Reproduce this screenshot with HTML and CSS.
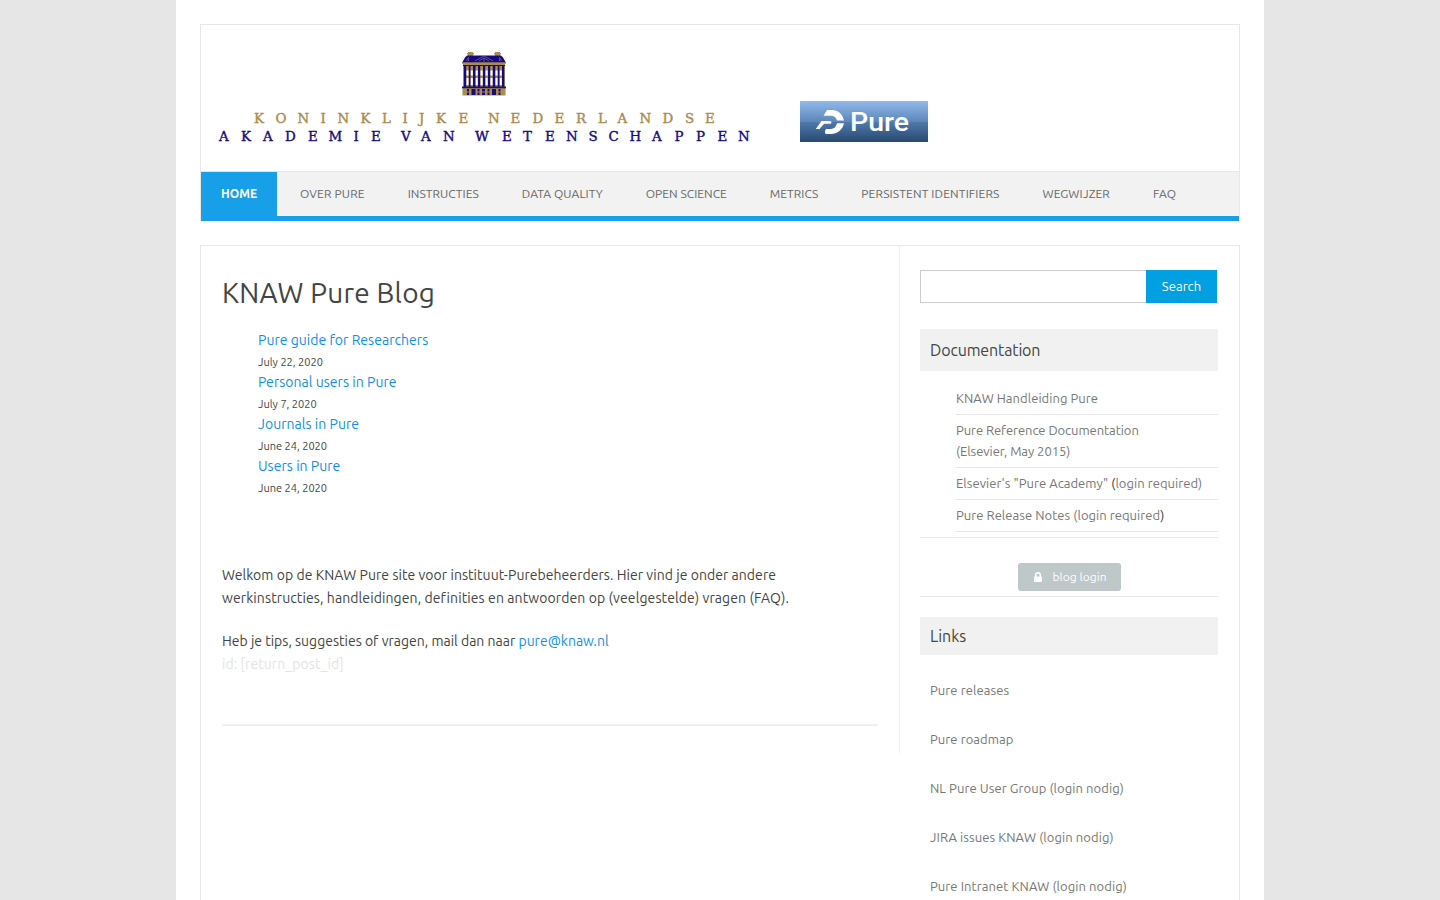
FILE: index.html
```html
<!DOCTYPE html>
<html lang="nl">
<head>
<meta charset="utf-8">
<title>KNAW Pure Blog</title>
<link rel="stylesheet" href="styles.css">
</head>
<body>
<div class="page">
  <header class="site-header">
    <div class="branding">
      <svg class="knaw-logo" width="540" height="100" viewBox="210 48 540 100" role="img">
        <g>
          <path fill="#a88d4d" d="M468 52h5v5h-5zM495 52h5v5h-5zM467 53h7v1.500h-7zM494 53h7v1.500h-7z"/>
          <path fill="#170a80" d="M467 55.500h34l2 2 3 5.500h-44l3-5.500z"/>
          <path fill="#7a6560" d="M462 62h44v1.500h-44z"/>
          <path fill="none" stroke="#7a6578" stroke-width=".8" d="M475 61l9-5 9 5M479 61l5-3 5 3M484 58v4M467 61v-2l1.500-1.500v3.500M499.500 61v-3.500l1.500 1.500v2"/>
          <path fill="#a88d4d" d="M463 63h42v27h-42z"/>
          <path fill="#170a80" d="M463 65h42v1h-42zM464 66h2.200v21h-2.200zM468.700 66h1.800v21h-1.800zM473 66h2.500v21h-2.500zM478 66h2.200v21h-2.200zM483 66h2.200v21h-2.200zM488 66h2.200v21h-2.200zM492.800 66h2.500v21h-2.500zM497.700 66h1.800v21h-1.800zM502 66h2.200v21h-2.200zM462 86.500h44v2h-44z"/>
          <path fill="#fff" d="M466.500 70.500h2v5h-2zM470.800 70.500h2v5h-2zM475.700 70.500h2v5h-2zM480.600 70.500h2v5h-2zM485.600 70.500h2v5h-2zM490.500 70.500h2v5h-2zM495.500 70.500h2v5h-2zM499.800 70.500h2v5h-2zM466.500 78h2v7h-2zM470.800 78h2v7h-2zM475.700 78h2v7h-2zM480.600 78h2v7h-2zM485.600 78h2v7h-2zM490.500 78h2v7h-2zM495.500 78h2v7h-2zM499.800 78h2v7h-2z"/>
          <path fill="#a88d4d" d="M462.500 88.500h43v7h-43z"/>
          <path fill="#170a80" d="M467 89h2v6h-2zM471.500 89h4v6h-4zM477.500 89h2v6h-2zM482 89h3v6h-3zM487.500 89h2v6h-2zM492 89h4v6h-4zM498.500 89h2v6h-2z"/>
          <path fill="#a88d4d" d="M467 91.500h3v1h-3zM477 91.500h3v1h-3zM482 91.500h3v1h-3zM487 91.500h3v1h-3zM498 91.500h3v1h-3z"/>
        </g>
        <text class="knaw-line gold" y="122.500" x="254 275.500 297.500 320.500 337.500 360.500 382 402.500 419 436 458.500 488 510.500 532.500 554.500 576 598 617.500 639.500 662.500 685 705">KONINKLIJKENEDERLANDSE</text>
        <text class="knaw-line navy" y="141" x="219 241 263 285 308 328.500 353.500 371 401 421 443 475 502 523 545 566 588.500 608.500 629.500 652 674.500 696 717.500 738">AKADEMIEVANWETENSCHAPPEN</text>
      </svg>
      <svg class="pure-logo" width="128" height="41" viewBox="0 0 128 41" role="img">
        <defs>
          <linearGradient id="pure-bg" x1="0" y1="0" x2="0" y2="1">
            <stop offset="0" stop-color="#92baec"/>
            <stop offset=".5" stop-color="#5d87ba"/>
            <stop offset=".52" stop-color="#4f79ab"/>
            <stop offset="1" stop-color="#284870"/>
          </linearGradient>
        </defs>
        <path fill="url(#pure-bg)" d="M0 0h128v41H0z"/>
        <path fill="#fff" d="M27 9h5c6 0 10.500 4 12 10.500h-7c-.8-2.800-3-4.800-6.500-4.800H23.500zM21.500 20H30c1.600 0 2 1.500.8 2.800h-6.600L19.500 28H15.800z"/>
        <path fill="#fff" d="M37 22.300h7C42.500 29 37.500 33 31 33h-4.500c-1.700 0-2-2.400-.6-5H31c3 0 5.200-2.300 6-5.700z"/>
        <text class="pure-word" x="50" y="29.500" textLength="59" lengthAdjust="spacingAndGlyphs">Pure</text>
      </svg>
    </div>
    <nav class="main-nav">
      <a class="current">HOME</a>
      <a class="wider">OVER PURE</a>
      <a>INSTRUCTIES</a>
      <a>DATA QUALITY</a>
      <a>OPEN SCIENCE</a>
      <a>METRICS</a>
      <a class="wider">PERSISTENT IDENTIFIERS</a>
      <a class="wide">WEGWIJZER</a>
      <a class="wide">FAQ</a>
    </nav>
  </header>

  <div class="content">
    <main class="main-col">
      <h1>KNAW Pure Blog</h1>
      <ul class="posts">
        <li><a>Pure guide for Researchers</a><time>July 22, 2020</time></li>
        <li><a>Personal users in Pure</a><time>July 7, 2020</time></li>
        <li><a>Journals in Pure</a><time>June 24, 2020</time></li>
        <li><a>Users in Pure</a><time>June 24, 2020</time></li>
      </ul>
      <p><span class="slight">Welkom op de KNAW Pure site voor instituut-Purebeheerders. Hier vind je onder andere</span><br><span class="wide">werkinstructies, handleidingen, definities en antwoorden op (veelgestelde) vragen (FAQ).</span></p>
      <p>Heb je tips, suggesties of vragen, mail dan naar <a>pure@knaw.nl</a><br><span class="post-id">id: [return_post_id]</span></p>
      <hr>
    </main>

    <aside class="sidebar">
      <form class="search"><input type="text" aria-label="Search"><button type="button">Search</button></form>
      <h2 class="doc-title">Documentation</h2>
      <ul class="docs">
        <li><a>KNAW Handleiding Pure</a></li>
        <li class="narrow"><a>Pure Reference Documentation<br>(Elsevier, May 2015)</a></li>
        <li><a>Elsevier's "Pure Academy"</a> (<a>login required)</a></li>
        <li><a>Pure Release Notes (login required</a>)</li>
      </ul>
      <div class="login-row">
        <a class="login"><svg width="8" height="10" viewBox="0 0 8 10"><path fill="#fff" fill-rule="evenodd" d="M1 4.500V3a3 3 0 0 1 6 0v1.500h.4c.4 0 .6.2.6.6v4.200c0 .4-.2.700-.6.700H.6c-.4 0-.6-.3-.6-.700V5.100c0-.4.200-.6.600-.6zm1.500 0h3V3a1.500 1.500 0 0 0-3 0z"/></svg><span>blog login</span></a>
      </div>
      <h2 class="links-title">Links</h2>
      <ul class="links">
        <li>Pure releases</li>
        <li>Pure roadmap</li>
        <li>NL Pure User Group (login nodig)</li>
        <li>JIRA issues KNAW (login nodig)</li>
        <li>Pure Intranet KNAW (login nodig)</li>
      </ul>
    </aside>
  </div>
</div>
</body>
</html>
```
FILE: styles.css
```css
* { box-sizing: border-box; }
body {
  margin: 0;
  background: #e6e6e6;
  color: #444;
  font: 14px/23px Ubuntu, "Noto Sans", sans-serif;
}
h1, h2, p, ul { margin: 0; padding: 0; font-weight: 400; }
ul { list-style: none; }

.page {
  width: 1088px;
  height: 900px;
  margin: 0 auto;
  padding: 24px 24px 0;
  background: #fff;
}

/* Header */
.site-header { border: 1px solid #e8e8e8; border-bottom: 0; height: 197px; }
.branding { display: flex; height: 146px; padding: 23px 0 0 9px; align-items: flex-start; }
.branding svg { display: block; flex: none; }
.pure-logo { margin: 53px 0 0 50px; }
.knaw-line { font: 13.400px "DejaVu Serif", serif; stroke-width: .4; }
.gold { fill: #a88d4d; stroke: #a88d4d; }
.navy { fill: #170a80; stroke: #170a80; }
.pure-word { font: 500 25px Roboto, sans-serif; fill: #fff; }

.main-nav {
  display: flex;
  gap: 43px;
  height: 50px;
  border-top: 1px solid #e8e8e8;
  border-bottom: 5px solid #17a0e7;
  background: #f2f2f2;
  font-size: 12px;
  line-height: 44px;
  letter-spacing: .04px;
  color: #666;
  white-space: nowrap;
}
.main-nav .current {
  width: 76px;
  margin-right: -20px;
  padding-left: 20px;
  background: #17a0e7;
  color: #fff;
  font-weight: 700;
}

/* Tracking */
.narrow { letter-spacing: -.06px; }
.slight { letter-spacing: .047px; }
.wide { letter-spacing: .1px; }
.wider { letter-spacing: .15px; }

/* Content frame */
.content {
  display: flex;
  align-items: flex-start;
  height: 655px;
  margin-top: 24px;
  border: 1px solid #e8e8e8;
  border-bottom: 0;
}
.main-col {
  width: 699px;
  height: 507px;
  padding: 29px 21px 0;
  border-right: 1px solid #efefef;
}
h1 { font-size: 28px; line-height: 36px; letter-spacing: .22px; }
.main-col a { color: #0f8fe6; }
.posts { margin: 19px 0 66px; padding-left: 36px; line-height: 21px; }
.posts a, .posts time { display: block; }
.posts a { letter-spacing: .03px; }
.posts time { height: 21px; font-size: 11px; line-height: 23px; }
.main-col p { margin-bottom: 20px; white-space: nowrap; }
.post-id { color: #e4e4e4; letter-spacing: .08px; }
hr { height: 2px; margin: 48px 0 0; border: 0; background: #f0f0f0; }

/* Sidebar */
.sidebar {
  width: 298px;
  margin: 24px 0 0 20px;
  font-size: 13px;
  line-height: 21px;
  white-space: nowrap;
}
.search { display: flex; height: 33px; padding-right: 1px; }
.search input { flex: 1; min-width: 0; border: 1px solid #ccc; border-right: 0; background: #fff; }
.search button {
  width: 71px;
  padding: 0;
  border: 0;
  background: #00a0e2;
  color: #fff;
  font: inherit;
  letter-spacing: .06px;
}
h2 { padding-left: 10px; background: #f1f1f1; font-size: 16px; }
.doc-title { margin: 26px 0 12px; line-height: 42px; letter-spacing: -.14px; }
.docs { padding: 0 0 5px 36px; border-bottom: 1px solid #e6e6e6; color: #333; }
.docs li { padding: 5px 0; border-bottom: 1px solid #e6e6e6; }
.docs li:not(.narrow) { letter-spacing: .05px; }
.docs a, .links { color: #777; }
.login-row { display: flex; justify-content: center; padding: 25px 0 5px; border-bottom: 1px solid #e6e6e6; }
.login {
  display: flex;
  align-items: center;
  gap: 11px;
  width: 103px;
  height: 28px;
  padding-left: 16px;
  border-radius: 3px;
  background: #bec8c9;
  color: #fff;
  font-size: 12px;
  letter-spacing: .05px;
}
.login span { padding-bottom: 1px; }
.links-title { margin: 20px 0 25px; line-height: 38px; }
.links { display: grid; gap: 28px; padding-left: 10px; letter-spacing: .08px; }
```
